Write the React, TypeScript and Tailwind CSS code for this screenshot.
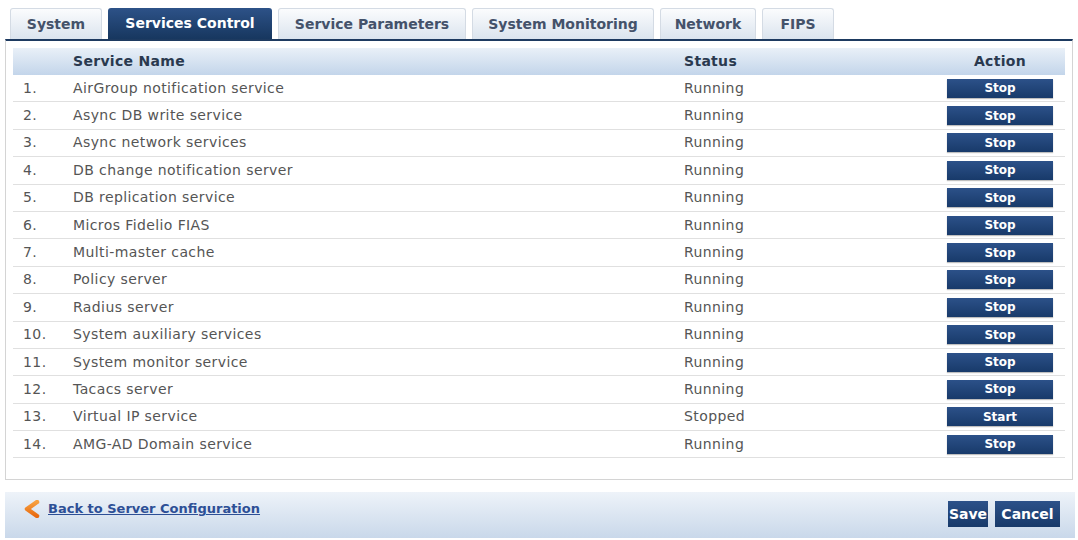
import React from "react";

const tabs = [
  { label: "System", w: "w-[92px]" },
  { label: "Services Control", w: "w-[164px]", active: true },
  { label: "Service Parameters", w: "w-[188px]" },
  { label: "System Monitoring", w: "w-[182px]" },
  { label: "Network", w: "w-[96px]" },
  { label: "FIPS", w: "w-[72px]" },
];

const services: [string, string][] = [
  ["AirGroup notification service", "Running"],
  ["Async DB write service", "Running"],
  ["Async network services", "Running"],
  ["DB change notification server", "Running"],
  ["DB replication service", "Running"],
  ["Micros Fidelio FIAS", "Running"],
  ["Multi-master cache", "Running"],
  ["Policy server", "Running"],
  ["Radius server", "Running"],
  ["System auxiliary services", "Running"],
  ["System monitor service", "Running"],
  ["Tacacs server", "Running"],
  ["Virtual IP service", "Stopped"],
  ["AMG-AD Domain service", "Running"],
];

export default function App() {
  return (
    <div className="w-[1078px] h-[540px] bg-white overflow-hidden font-['DejaVu_Sans',sans-serif]">
      {/* Tabs */}
      <div className="flex gap-[6px] pl-[10px] pt-[8px]">
        {tabs.map((t) =>
          t.active ? (
            <div
              key={t.label}
              className={`${t.w} h-[31px] flex items-center justify-center rounded-t-[3px] bg-gradient-to-b from-[#2d5288] to-[#17375f] text-white font-bold text-[14px]`}
            >
              {t.label}
            </div>
          ) : (
            <div
              key={t.label}
              className={`${t.w} h-[31px] flex items-center justify-center rounded-t-[3px] border border-b-0 border-[#d4dbe4] bg-gradient-to-b from-[#fbfcfd] to-[#dbe4ee] text-[#44526a] font-bold text-[14px]`}
            >
              {t.label}
            </div>
          )
        )}
      </div>

      {/* Panel */}
      <div className="ml-[5px] w-[1068px] border-t-2 border-t-[#1d3a60] border-x border-b border-x-[#d4d4d4] border-b-[#d4d4d4] pt-[7px] px-[7px] pb-[21px]">
        <div className="h-[27px] flex items-center bg-gradient-to-b from-[#e9f0f8] to-[#c3d5ea] text-[#2a394f] font-bold text-[14px] tracking-[0.3px]">
          <div className="w-[60px]" />
          <div className="w-[611px]">Service Name</div>
          <div className="flex-1">Status</div>
          <div className="w-[106px] mr-[12px] text-center">Action</div>
        </div>
        {services.map(([name, status], i) => (
          <div
            key={name}
            className="h-[27.4px] flex items-center border-b border-[#e0e0e0] text-[14px] tracking-[0.4px] text-[#555555]"
          >
            <div className="w-[60px] pl-[10px]">{i + 1}.</div>
            <div className="w-[611px]">{name}</div>
            <div className="flex-1">{status}</div>
            <div className="w-[106px] mr-[12px] h-[19px] flex items-center justify-center bg-gradient-to-b from-[#2c5189] to-[#183a6a] text-white font-bold text-[12px] tracking-normal shadow-[0_1px_1px_rgba(0,0,0,0.25)]">
              {status === "Running" ? "Stop" : "Start"}
            </div>
          </div>
        ))}
      </div>

      {/* Footer */}
      <div className="mt-[12px] ml-[5px] w-[1070px] h-[46px] flex justify-between bg-gradient-to-b from-[#eef3f9] to-[#c9d8ea]">
        <div className="flex items-start pt-[8px] pl-[17px] gap-[6px]">
          <svg width="20" height="18" viewBox="0 0 20 18">
            <defs>
              <linearGradient id="og" x1="0" y1="0" x2="0" y2="1">
                <stop offset="0" stopColor="#f7a040" />
                <stop offset="1" stopColor="#e86a10" />
              </linearGradient>
            </defs>
            <polyline
              points="15,2 5,9 15,16"
              fill="none"
              stroke="url(#og)"
              strokeWidth="4.5"
              strokeLinecap="round"
              strokeLinejoin="round"
            />
          </svg>
          <span className="text-[13px] font-bold text-[#2d4f96] underline leading-[17px]">
            Back to Server Configuration
          </span>
        </div>
        <div className="flex items-start gap-[7px] pt-[9px] pr-[15px]">
          <div className="w-[40px] h-[26px] flex items-center justify-center bg-gradient-to-b from-[#2c5189] to-[#183a6a] text-white font-bold text-[14px]">
            Save
          </div>
          <div className="w-[65px] h-[26px] flex items-center justify-center bg-gradient-to-b from-[#2c5189] to-[#183a6a] text-white font-bold text-[14px]">
            Cancel
          </div>
        </div>
      </div>
    </div>
  );
}
